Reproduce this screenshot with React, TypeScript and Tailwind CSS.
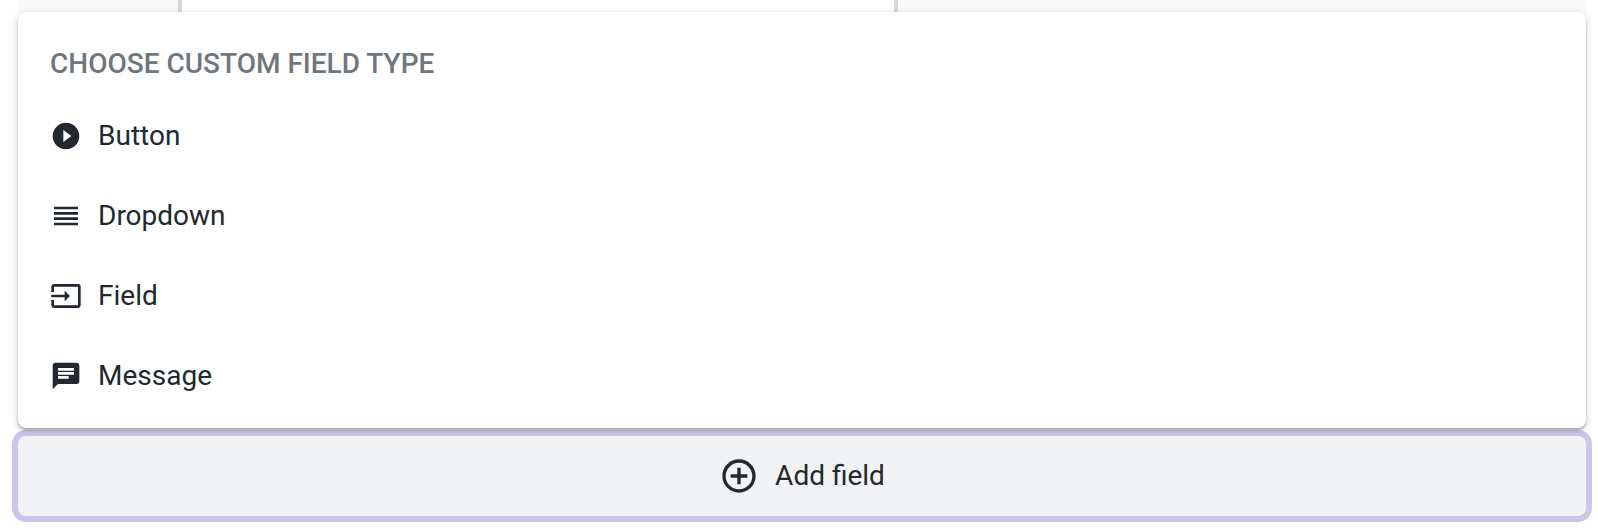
import React from 'react'
import { MdAddCircleOutline, MdChat, MdInput, MdPlayCircleFilled, MdReorder } from 'react-icons/md'

const fieldTypes = [
  { label: 'Button', Icon: MdPlayCircleFilled },
  { label: 'Dropdown', Icon: MdReorder },
  { label: 'Field', Icon: MdInput },
  { label: 'Message', Icon: MdChat },
]

export default function CustomFieldPicker() {
  return (
    <div className="bg-white pr-3 pb-4 pl-[18px] font-[Roboto,sans-serif] text-[28px] leading-8 text-[#212830]">
      <div className="flex h-3 bg-[#fafafa]">
        <div className="w-40"></div>
        <div className="w-[720px] border-x-4 border-[#d4d9dc] bg-white"></div>
      </div>

      <div className="relative z-10 rounded-lg bg-white px-8 pt-9 pb-3 shadow-[0_2px_2px_rgba(0,0,0,0.26),0_2px_8px_rgba(0,0,0,0.18)]">
        <h2 className="font-medium uppercase text-[#6f777e]">Choose custom field type</h2>
        <ul className="pt-4">
          {fieldTypes.map(({ label, Icon }) => (
            <li key={label}>
              <button type="button" className="flex h-20 w-full cursor-pointer items-center gap-4 text-left">
                <Icon className="size-8" aria-hidden="true" />
                <span>{label}</span>
              </button>
            </li>
          ))}
        </ul>
      </div>

      <button
        type="button"
        className="mt-2 flex h-20 w-full cursor-pointer items-center justify-center gap-4 rounded-lg bg-[#f2f3f5] ring-6 ring-[#cfc4ea]"
      >
        <MdAddCircleOutline className="size-10" aria-hidden="true" />
        <span>Add field</span>
      </button>
    </div>
  )
}
